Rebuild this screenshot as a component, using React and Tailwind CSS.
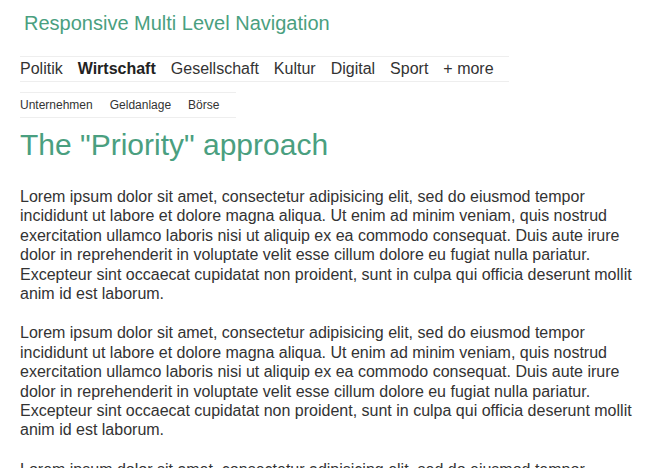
import React from "react";

const primaryNav = ["Politik", "Wirtschaft", "Gesellschaft", "Kultur", "Digital", "Sport", "+ more"];
const subNav = ["Unternehmen", "Geldanlage", "Börse"];

const lorem =
  "Lorem ipsum dolor sit amet, consectetur adipisicing elit, sed do eiusmod tempor incididunt ut labore et dolore magna aliqua. Ut enim ad minim veniam, quis nostrud exercitation ullamco laboris nisi ut aliquip ex ea commodo consequat. Duis aute irure dolor in reprehenderit in voluptate velit esse cillum dolore eu fugiat nulla pariatur. Excepteur sint occaecat cupidatat non proident, sunt in culpa qui officia deserunt mollit anim id est laborum.";

export default function App() {
  return (
    <div className="min-h-screen bg-white px-5 font-['Liberation_Sans',Arial,sans-serif] text-[#333]">
      {/* Site title */}
      <h1 className="ml-1 pt-[11px] text-[20px] leading-6 text-[#4a9f80]">
        Responsive Multi Level Navigation
      </h1>

      {/* Main navigation */}
      <nav className="mt-[21px] w-[489px] border-y border-[#eee]">
        <ul className="flex gap-[15px] text-[16px] leading-6">
          {primaryNav.map((item) => (
            <li key={item} className={item === "Wirtschaft" ? "font-bold text-[#222]" : ""}>
              {item}
            </li>
          ))}
        </ul>
      </nav>

      {/* Sub navigation */}
      <nav className="mt-[10px] w-[216px] border-y border-[#eee]">
        <ul className="flex gap-[17px] text-[12px] leading-6">
          {subNav.map((item) => (
            <li key={item}>{item}</li>
          ))}
        </ul>
      </nav>

      <h2 className="mt-[9px] text-[30px] leading-9 text-[#4a9f80]">The "Priority" approach</h2>

      <div className="mt-6 text-[16px] leading-[19.4px]">
        <p>{lorem}</p>
        <p className="mt-5">{lorem}</p>
        <p className="mt-5">{lorem}</p>
      </div>
    </div>
  );
}
